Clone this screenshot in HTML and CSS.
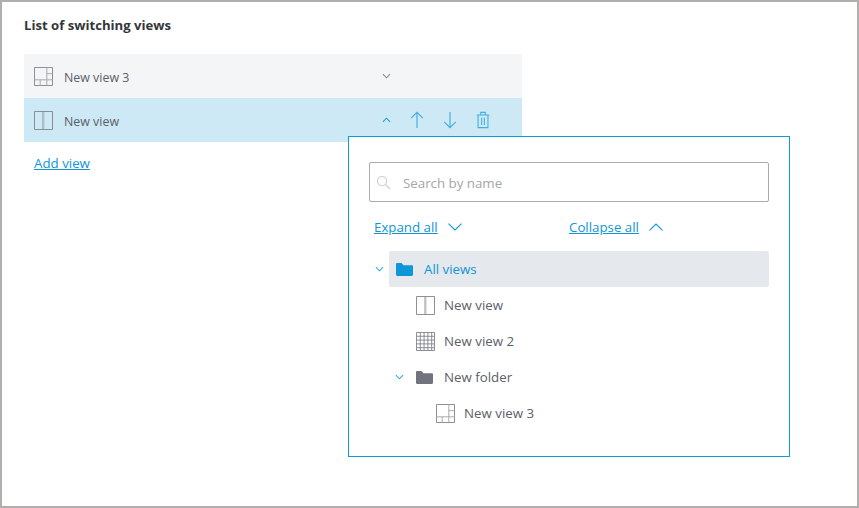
FILE: index.html
```html
<!DOCTYPE html>
<html lang="en">
<head>
    <meta charset="UTF-8">
    <title>List of switching views</title>
    <link rel="stylesheet" href="styles.css">
</head>
<body>
    <svg class="sprites" width="0" height="0">
        <symbol id="layout-split" viewBox="0 0 20 20">
            <path d="M.5.5h19v19H.5zM9.500.5v19" fill="none" stroke="currentColor"/>
            <path d="M10.500 1v18" stroke="#b9bec6"/>
        </symbol>
        <symbol id="layout-mixed" viewBox="0 0 20 20">
            <path d="M.5.5h19v19H.5z" fill="none" stroke="currentColor"/>
            <path d="M13.500.5v19M.5 13.500h19M13.500 7h6M6.500 13.500v6" fill="none" stroke="#a3a6ab"/>
        </symbol>
        <symbol id="layout-grid" viewBox="0 0 20 20">
            <path d="M.5.5h19v19H.5zM4.500.5v19M8.500.5v19M12.500.5v19M16.500.5v19M.5 4.500h19M.5 8.500h19M.5 12.500h19M.5 16.500h19" fill="none" stroke="currentColor"/>
        </symbol>
        <symbol id="folder" viewBox="0 0 17 13">
            <path d="M0 1.200C0 .5.5 0 1.200 0h4.300l2 2.200h8.300c.7 0 1.200.5 1.200 1.200v8.400c0 .7-.5 1.200-1.200 1.200H1.200C.5 13 0 12.500 0 11.800z" fill="currentColor"/>
        </symbol>
        <symbol id="chev-down" viewBox="0 0 10 6">
            <path d="M1 1l4 4 4-4" fill="none" stroke="currentColor" stroke-width="1.200"/>
        </symbol>
        <symbol id="chev-up" viewBox="0 0 10 6">
            <path d="M1 5l4-4 4 4" fill="none" stroke="currentColor" stroke-width="1.200"/>
        </symbol>
        <symbol id="tool-down" viewBox="0 0 14 8">
            <path d="M.5.7L7 7l6.500-6.300" fill="none" stroke="currentColor" stroke-width="1.100"/>
        </symbol>
        <symbol id="tool-up" viewBox="0 0 14 8">
            <path d="M.5 7.300L7 1l6.500 6.300" fill="none" stroke="currentColor" stroke-width="1.100"/>
        </symbol>
    </svg>

    <main class="frame">
        <h1 class="title">List of switching views</h1>

        <ul class="view-list">
            <li class="view-row">
                <svg class="layout-icon"><use href="#layout-mixed"/></svg>
                <span class="view-name">New view 3</span>
                <div class="row-actions">
                    <svg class="row-chev row-chev-grey"><use href="#chev-down"/></svg>
                </div>
            </li>
            <li class="view-row view-row-active">
                <svg class="layout-icon"><use href="#layout-split"/></svg>
                <span class="view-name">New view</span>
                <div class="row-actions">
                    <svg class="row-chev"><use href="#chev-up"/></svg>
                    <svg class="action-icon" viewBox="0 0 20 20"><path d="M10 1.500V19M3.500 8L10 1.500 16.500 8" fill="none" stroke="currentColor" stroke-width="1.300"/></svg>
                    <svg class="action-icon" viewBox="0 0 20 20"><path d="M10 1v17.500M3.500 12l6.500 6.500 6.500-6.500" fill="none" stroke="currentColor" stroke-width="1.300"/></svg>
                    <svg class="action-icon" viewBox="0 0 20 20"><path d="M3 4.500h14M4.500 4.500v14h11v-14M7.500 4.500v-3h5v3M8.500 7.500v8M11.500 7.500v8" fill="none" stroke="currentColor" stroke-width="1.200"/></svg>
                </div>
            </li>
        </ul>

        <a class="link add-view" href="#">Add view</a>

        <section class="picker">
            <div class="search">
                <svg class="search-icon" viewBox="0 0 16 16"><circle cx="6.500" cy="6.500" r="5" fill="none" stroke="currentColor" stroke-width="1.200"/><path d="M10.200 10.200L15 15" stroke="currentColor" stroke-width="1.500"/></svg>
                <span class="search-text">Search by name</span>
            </div>

            <div class="tree-tools">
                <div class="tree-tool">
                    <a class="link" href="#">Expand all</a>
                    <svg class="tool-chev"><use href="#tool-down"/></svg>
                </div>
                <div class="tree-tool">
                    <a class="link" href="#">Collapse all</a>
                    <svg class="tool-chev"><use href="#tool-up"/></svg>
                </div>
            </div>

            <ul class="tree">
                <li class="tree-row tree-row-root">
                    <svg class="tree-chev"><use href="#chev-down"/></svg>
                    <div class="tree-item tree-item-selected">
                        <svg class="folder-icon"><use href="#folder"/></svg>
                        <span>All views</span>
                    </div>
                </li>
                <li class="tree-row level-1">
                    <div class="tree-item">
                        <svg class="layout-icon"><use href="#layout-split"/></svg>
                        <span>New view</span>
                    </div>
                </li>
                <li class="tree-row level-1">
                    <div class="tree-item">
                        <svg class="layout-icon"><use href="#layout-grid"/></svg>
                        <span>New view 2</span>
                    </div>
                </li>
                <li class="tree-row level-1-folder">
                    <svg class="tree-chev"><use href="#chev-down"/></svg>
                    <div class="tree-item">
                        <svg class="folder-icon folder-icon-grey"><use href="#folder"/></svg>
                        <span>New folder</span>
                    </div>
                </li>
                <li class="tree-row level-2">
                    <div class="tree-item">
                        <svg class="layout-icon"><use href="#layout-mixed"/></svg>
                        <span>New view 3</span>
                    </div>
                </li>
            </ul>
        </section>
    </main>
</body>
</html>
```

FILE: styles.css
```css
* {
    box-sizing: border-box;
}
body {
    margin: 0;
    font-family: 'Open Sans', 'Noto Sans', sans-serif;
    font-size: 13.300px;
    color: #5b5e68;
    background-color: #fff;
}
ul {
    list-style: none;
    margin: 0;
    padding: 0;
}
.sprites {
    position: absolute;
}
.frame {
    position: relative;
    width: 859px;
    height: 508px;
    border: 2px solid #b3aeae;
    padding: 16px 22px;
}
.title {
    margin: 0;
    height: 20px;
    line-height: 15px;
    font-size: 13.150px;
    font-weight: 700;
    color: #33363b;
}
.view-list {
    width: 498px;
    margin-top: 16px;
}
.view-row {
    display: flex;
    align-items: center;
    height: 44px;
    padding-left: 10px;
    background-color: #f4f5f7;
}
.view-row-active {
    background-color: #cde9f5;
}
.layout-icon {
    flex: none;
    width: 19px;
    height: 19px;
    color: #85888e;
}
.view-name {
    width: 318px;
    margin-left: 11px;
    padding-top: 2px;
    font-size: 12.400px;
}
.row-actions {
    display: flex;
    align-items: center;
    color: #1c9fd8;
}
.row-chev {
    width: 9px;
    height: 6px;
    margin-right: 17px;
}
.row-chev-grey {
    color: #85888e;
}
.action-icon {
    width: 18px;
    height: 20px;
    margin-right: 15px;
    color: #45aee0;
}
.link {
    color: #0f96d6;
    text-decoration: underline;
}
.add-view {
    display: block;
    margin: 12px 0 0 10px;
    line-height: 18px;
}
.picker {
    position: absolute;
    left: 346px;
    top: 134px;
    width: 442px;
    height: 321px;
    padding: 25px 20px 0;
    background-color: #fff;
    border: 1px solid #0f9bd7;
}
.search {
    display: flex;
    align-items: center;
    height: 40px;
    padding-left: 6px;
    border: 1px solid #a9abaf;
    border-radius: 2px;
}
.search-icon {
    width: 15px;
    height: 15px;
    color: #d0d2d5;
}
.search-text {
    margin-left: 12px;
    padding-top: 2px;
    color: #a4a6aa;
}
.tree-tools {
    display: flex;
    margin-top: 15px;
    padding-left: 5px;
    height: 20px;
}
.tree-tool {
    display: flex;
    align-items: center;
    width: 195px;
}
.tool-chev {
    width: 14px;
    height: 8px;
    margin-left: 10px;
    color: #0f96d6;
}
.tree {
    margin-top: 14px;
}
.tree-row {
    display: flex;
    align-items: center;
    height: 36px;
}
.tree-item {
    display: flex;
    flex: 1;
    align-items: center;
    gap: 9px;
    height: 36px;
    padding-left: 7px;
    border-radius: 2px;
}
.tree-item-selected {
    background-color: #e5e8ed;
    color: #0f96d6;
}
.tree-item-selected .folder-icon,
.level-1-folder .folder-icon {
    margin-right: 2px;
}
.tree-chev {
    flex: none;
    width: 9px;
    height: 6px;
    margin: 0 5px 0 6px;
    color: #2ea8de;
}
.folder-icon {
    flex: none;
    width: 17px;
    height: 13px;
    color: #0f96d6;
}
.folder-icon-grey {
    color: #71747e;
}
.level-1 {
    padding-left: 40px;
}
.level-1-folder {
    padding-left: 20px;
}
.level-2 {
    padding-left: 60px;
}
```
